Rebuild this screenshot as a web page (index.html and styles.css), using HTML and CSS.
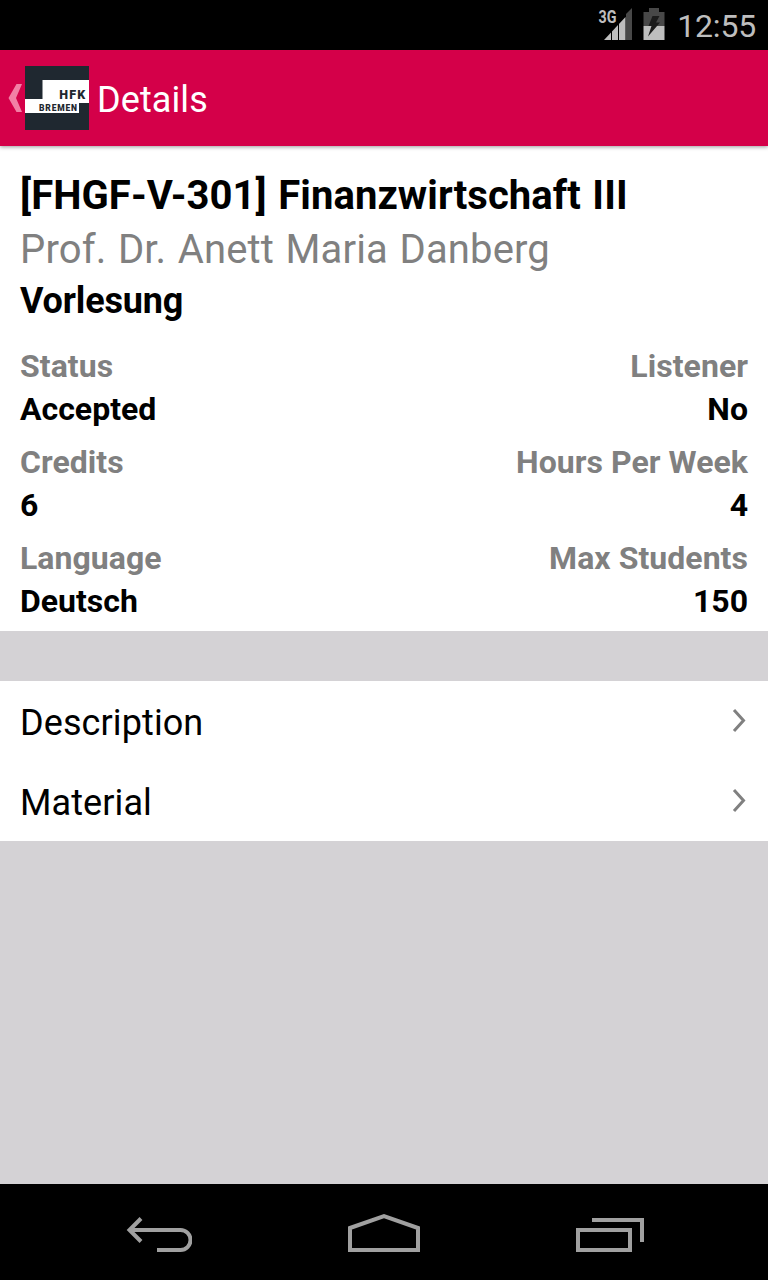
FILE: index.html
```
<!DOCTYPE html>
<html lang="en">
<head>
    <meta charset="UTF-8">
    <meta name="viewport" content="width=device-width, initial-scale=1.0">
    <title>Details</title>
    <link rel="stylesheet" href="styles.css">
</head>
<body>
    <div class="status-bar">
        <svg class="signal" width="36" height="34" viewBox="0 0 36 34">
            <path d="M8 32L29.500 9V32Z" fill="#bebebe"/>
            <path d="M30 6L36 0V32H30Z" fill="#484848"/>
            <path d="M15.500 20V32M22.500 14V32" stroke="#000" stroke-width="1"/>
            <text class="network" x="2.500" y="15" textLength="18" lengthAdjust="spacingAndGlyphs">3G</text>
        </svg>
        <svg class="battery" width="22" height="32" viewBox="0 0 22 32">
            <path d="M6 0H16V4H21.500V18H.5V4H6Z" fill="#484848"/>
            <path d="M.5 18H21.500V32H.5Z" fill="#bebebe"/>
            <path d="M9.500 8H16.500L13 14.500H17L5 28.500L8.500 18H5.500Z" fill="#1c1c1c"/>
        </svg>
        <span class="clock">12:55</span>
    </div>

    <header class="action-bar">
        <svg class="up" width="16" height="30" viewBox="0 0 16 30">
            <path d="M8.500 1H14L8 15L14 29H8.500L.5 15Z" fill="#f27fa5"/>
        </svg>
        <svg class="logo" width="64" height="64" viewBox="0 0 64 64">
            <path d="M0 0H64V64H0Z" fill="#1f2830"/>
            <path d="M17.500 14H64V37H54V47H0V33H17.500Z" fill="#fff"/>
            <text class="logo-top" x="34.300" y="33.300" textLength="26">HFK</text>
            <text class="logo-bottom" x="14" y="44.700" textLength="38">BREMEN</text>
        </svg>
        <h1>Details</h1>
    </header>

    <main>
        <section class="course">
            <h2>[FHGF-V-301] Finanzwirtschaft III</h2>
            <p class="lecturer">Prof. Dr. Anett Maria Danberg</p>
            <p class="type">Vorlesung</p>

            <dl class="facts">
                <div class="fact">
                    <dt>Status</dt>
                    <dd>Accepted</dd>
                </div>
                <div class="fact right">
                    <dt>Listener</dt>
                    <dd>No</dd>
                </div>
                <div class="fact">
                    <dt>Credits</dt>
                    <dd>6</dd>
                </div>
                <div class="fact right">
                    <dt>Hours Per Week</dt>
                    <dd>4</dd>
                </div>
                <div class="fact">
                    <dt>Language</dt>
                    <dd>Deutsch</dd>
                </div>
                <div class="fact right">
                    <dt>Max Students</dt>
                    <dd>150</dd>
                </div>
            </dl>
        </section>

        <nav class="links">
            <a href="#" class="link">
                <span>Description</span>
                <svg width="14" height="26" viewBox="0 0 14 26">
                    <path d="M2 2L11.500 12.500L2 23" fill="none" stroke="#808080" stroke-width="3"/>
                </svg>
            </a>
            <a href="#" class="link">
                <span>Material</span>
                <svg width="14" height="26" viewBox="0 0 14 26">
                    <path d="M2 2L11.500 12.500L2 23" fill="none" stroke="#808080" stroke-width="3"/>
                </svg>
            </a>
        </nav>
    </main>

    <footer class="nav-bar">
        <svg width="80" height="38" viewBox="0 0 80 38">
            <path d="M17.500 16H68.500A10 10 0 0 1 68.500 36H45M29 4.500L17.500 16L29 27.500" fill="none" stroke="#a0a0a0" stroke-width="4"/>
        </svg>
        <svg width="72" height="38" viewBox="0 0 72 38">
            <path d="M2 14L36 2.200L70 14V36H2Z" fill="none" stroke="#a0a0a0" stroke-width="4"/>
        </svg>
        <svg width="68" height="38" viewBox="0 0 68 38">
            <path d="M2 16H54V36H2ZM16 6H66V28" fill="none" stroke="#a0a0a0" stroke-width="4"/>
        </svg>
    </footer>
</body>
</html>
```
FILE: styles.css
```
* {
    margin: 0;
    padding: 0;
    box-sizing: border-box;
}

body {
    display: flex;
    flex-direction: column;
    height: 100vh;
    background-color: #d4d2d5;
    color: #000;
    font-family: Roboto, sans-serif;
}

.status-bar {
    display: flex;
    justify-content: flex-end;
    height: 50px;
    padding: 8px 12px 0 0;
    background-color: #000;
    color: #bebebe;
}

.signal {
    margin-right: 11px;
}

.network {
    fill: #bebebe;
    font-size: 17.5px;
    font-weight: 700;
}

.battery {
    margin-right: 12px;
}

.clock {
    font-size: 32px;
    letter-spacing: -0.2px;
    line-height: 36px;
}

.action-bar {
    display: flex;
    align-items: center;
    position: relative;
    height: 96px;
    padding-left: 8px;
    background-color: #d40049;
    box-shadow: 0 1px 4px rgba(0, 0, 0, 0.4);
    color: #fff;
}

.logo {
    margin: 0 8px 0 1px;
}

.logo-top,
.logo-bottom {
    fill: #1f2830;
    font-weight: 900;
}

.logo-top {
    font-size: 12.5px;
}

.logo-bottom {
    font-size: 8.5px;
}

.action-bar h1 {
    padding-top: 3px;
    font-size: 36px;
    font-weight: 400;
    letter-spacing: 0.1px;
}

main {
    flex: 1;
}

.course {
    padding: 23px 20px 8px;
    background-color: #fff;
}

.course h2 {
    font-size: 40px;
    font-weight: 700;
    letter-spacing: 0.08px;
    line-height: 54px;
    word-spacing: 1.5px;
}

.lecturer {
    color: #808080;
    font-size: 40px;
    letter-spacing: 0.15px;
    line-height: 54px;
    word-spacing: 1.4px;
}

.type {
    font-size: 36px;
    font-weight: 700;
    letter-spacing: -0.15px;
    line-height: 49px;
}

.facts {
    display: grid;
    grid-template-columns: 1fr 1fr;
    row-gap: 10px;
    margin-top: 19px;
    font-size: 32px;
    font-weight: 700;
    line-height: 43px;
}

.facts dt {
    color: #808080;
    letter-spacing: 0.05px;
}

.right {
    text-align: right;
}

.links {
    margin-top: 50px;
    background-color: #fff;
}

.link {
    display: flex;
    justify-content: space-between;
    align-items: center;
    height: 80px;
    padding: 0 22px 0 20px;
    color: #000;
    font-size: 36px;
    letter-spacing: 0.1px;
    line-height: 42px;
    text-decoration: none;
}

.link span {
    padding-top: 3px;
}

.nav-bar {
    display: flex;
    justify-content: space-between;
    align-items: center;
    height: 96px;
    padding: 2px 124px 0 112px;
    background-color: #000;
}
```
